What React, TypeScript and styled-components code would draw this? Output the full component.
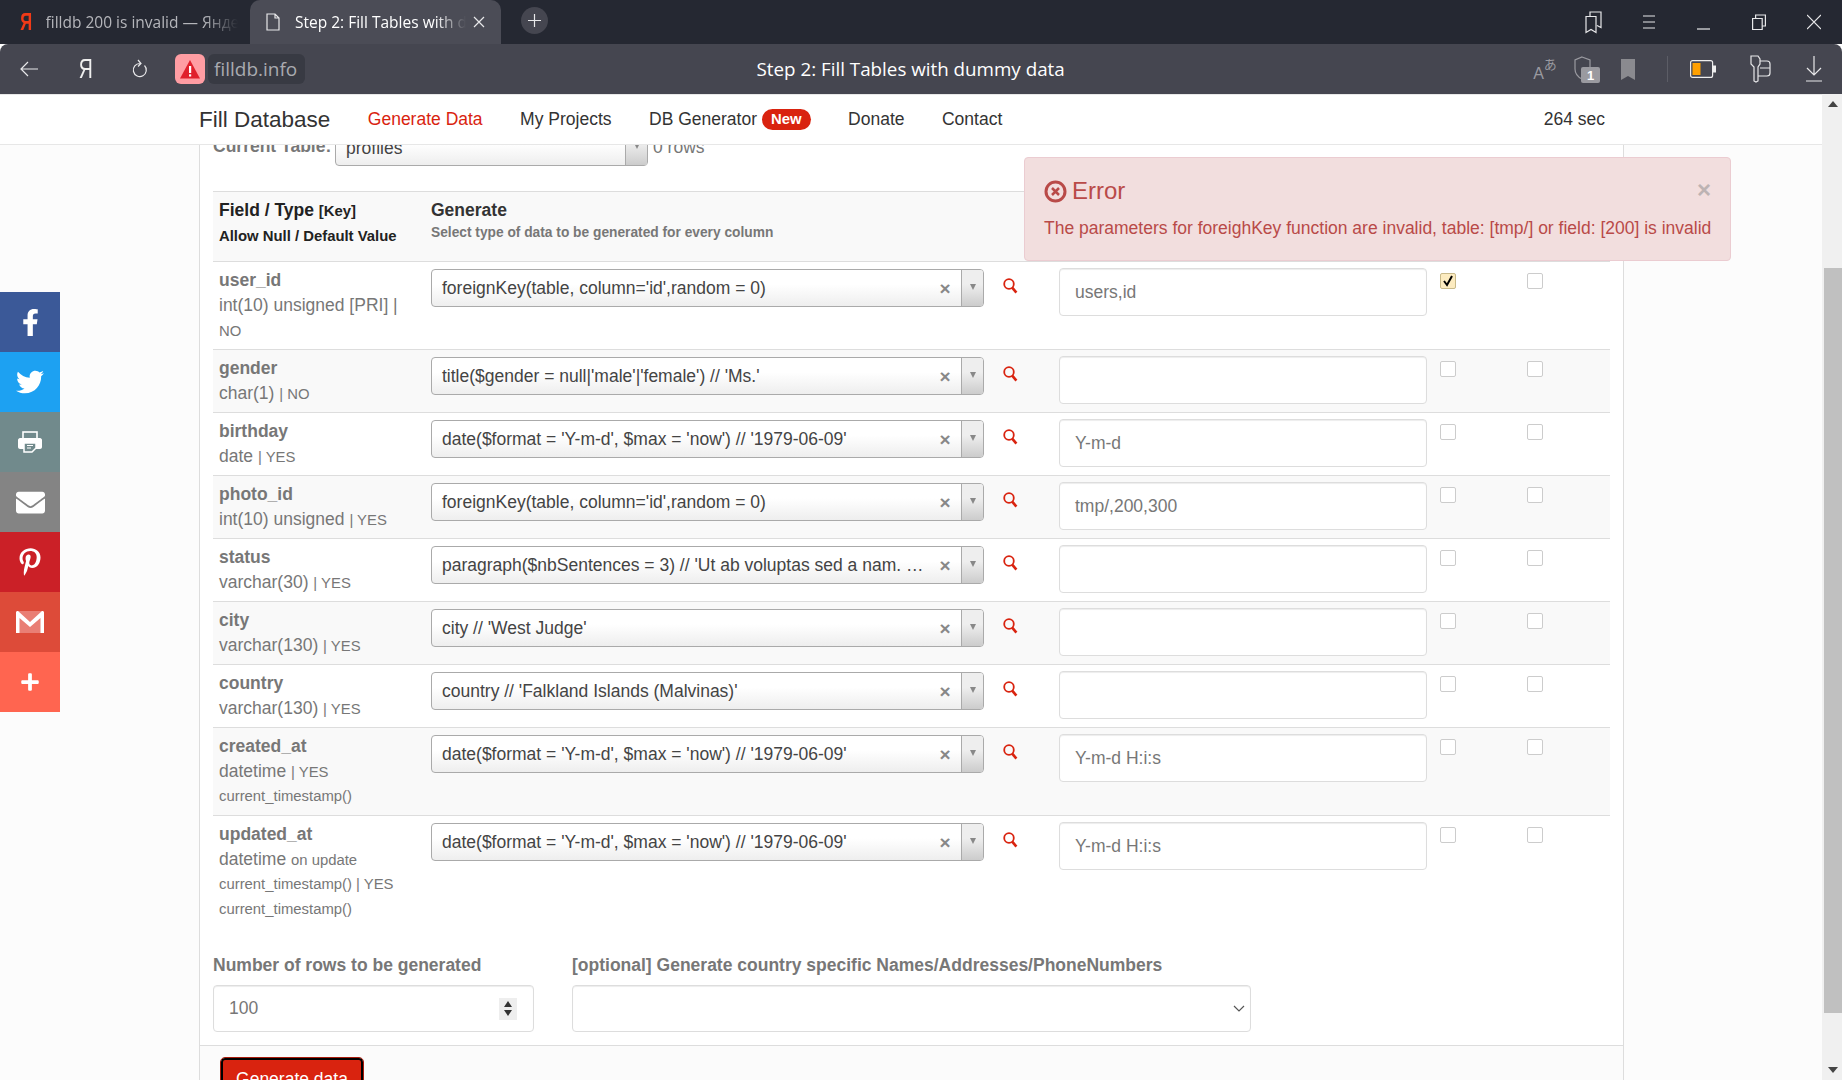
import React from "react";
import styled, { createGlobalStyle } from "styled-components";
import { FaFacebookF, FaTwitter, FaPinterestP, FaEnvelope, FaPlus } from "react-icons/fa";

const GlobalStyle = createGlobalStyle`
  html, body { margin: 0; padding: 0; height: 100%; overflow: hidden; }
  body { font-family: "Liberation Sans", Arial, sans-serif; font-size: 17.5px; color: #333; }
  * { box-sizing: border-box; }
`;

const Win = styled.div`
  position: relative;
  height: 1080px;
  display: flex;
  flex-direction: column;
  overflow: hidden;
`;

const TabStrip = styled.div`
  height: 44px;
  background: #252832;
  display: flex;
  align-items: stretch;
  font-family: "Open Sans", "Noto Sans", sans-serif;
  font-size: 15.5px;
`;
const Tab = styled.div<{ $active?: boolean }>`
  width: ${(p) => (p.$active ? 251 : 250)}px;
  display: flex;
  align-items: center;
  gap: ${(p) => (p.$active ? 15 : 11)}px;
  padding-left: ${(p) => (p.$active ? 16 : 18)}px;
  padding-right: ${(p) => (p.$active ? 16 : 12)}px;
  color: ${(p) => (p.$active ? "#fff" : "#b5b6bb")};
  background: ${(p) => (p.$active ? "#4b4c56" : "transparent")};
  border-radius: 10px 10px 0 0;
`;
const TabTitle = styled.span<{ $active?: boolean }>`
  flex: 1;
  white-space: nowrap;
  overflow: hidden;
  margin-right: ${(p) => (p.$active ? -8 : 0)}px;
  -webkit-mask-image: linear-gradient(to right, #000 82%, transparent 100%);
  mask-image: linear-gradient(to right, #000 82%, transparent 100%);
`;
const YaMark = styled.span<{ $light?: boolean }>`
  display: inline-block;
  font-family: "Liberation Sans", sans-serif;
  font-size: ${(p) => (p.$light ? 27 : 23)}px;
  color: ${(p) => (p.$light ? "#eee" : "#f03a17")};
  font-weight: ${(p) => (p.$light ? 400 : 700)};
  line-height: 1;
  transform: scaleX(0.72);
`;
const NewTab = styled.div`
  width: 27px;
  height: 27px;
  margin: 7px 0 0 20px;
  border-radius: 50%;
  background: #454650;
  display: flex;
  align-items: center;
  justify-content: center;
`;
const WinButtons = styled.div`
  margin-left: auto;
  display: flex;
  align-items: center;
`;
const Slot = styled.div<{ $w: number }>`
  width: ${(p) => p.$w}px;
  flex: none;
  display: flex;
  align-items: center;
  justify-content: center;
`;

const Toolbar = styled.div`
  height: 50px;
  background: #454650;
  border-radius: 8px 8px 0 0;
  display: flex;
  align-items: center;
  padding: 0 14px 0 20px;
  font-family: "Open Sans", "Noto Sans", sans-serif;
`;
const ToolLeft = styled.div`
  display: flex;
  align-items: center;
`;
const ToolBtn = styled.div<{ $w: number }>`
  width: ${(p) => p.$w}px;
  display: flex;
  align-items: center;
  justify-content: flex-start;
`;
const WarnBadge = styled.div`
  width: 30px;
  height: 30px;
  background: #ff9da3;
  border-radius: 6px;
  display: flex;
  align-items: center;
  justify-content: center;
`;
const Domain = styled.div`
  height: 30px;
  margin-left: 3px;
  padding: 0 8px 0 6px;
  background: #383a43;
  border-radius: 6px;
  color: #a9aab0;
  font-size: 19px;
  line-height: 30px;
`;
const PageTitle = styled.div`
  flex: 1;
  text-align: center;
  color: #fff;
  font-size: 18.8px;
  padding-right: 8px;
`;
const ToolRight = styled.div`
  display: flex;
  align-items: center;
`;
const Divider = styled.div`
  width: 1px;
  height: 26px;
  background: #5c5d66;
`;
const TranslateMark = styled.div`
  display: flex;
  align-items: flex-start;
  color: #9a9aa0;
  line-height: 1;
  font-family: "Liberation Sans", "Noto Sans CJK JP", sans-serif;
  height: 26px;
`;
const TranslateLatin = styled.span`
  font-size: 16px;
  margin-top: 10px;
`;
const TranslateKana = styled.span`
  font-family: "Noto Sans CJK JP", sans-serif;
  font-size: 13px;
  margin-top: 1px;
`;

const Viewport = styled.div`
  flex: 1;
  min-height: 0;
  display: flex;
`;
const PageArea = styled.div`
  flex: 1;
  min-width: 0;
  display: flex;
  flex-direction: column;
`;
const Nav = styled.div`
  height: 51px;
  flex: none;
  background: #fff;
  border-top: 1px solid #e8e8e8;
  border-bottom: 1px solid #e7e7e7;
  display: flex;
  align-items: center;
  padding: 0 217px 0 199px;
  color: #333;
`;
const Brand = styled.div`
  font-size: 22.5px;
  margin-right: 37.5px;
`;
const NavLink = styled.div<{ $active?: boolean }>`
  margin-right: 37.5px;
  display: flex;
  align-items: center;
  gap: 5px;
  color: ${(p) => (p.$active ? "#d9230f" : "#333")};
`;
const NewBadge = styled.span`
  background: #d9230f;
  color: #fff;
  font-size: 14.875px;
  font-weight: 700;
  height: 21px;
  line-height: 21px;
  padding: 0 9px;
  border-radius: 11px;
`;
const Timer = styled.div`
  margin-left: auto;
`;

const Scroller = styled.div`
  flex: 1;
  min-height: 0;
  overflow: hidden;
  background: #fcfcfc;
`;
const Panel = styled.div`
  width: 1425px;
  margin-left: 199px;
  background: #fff;
  border-left: 1px solid #ddd;
  border-right: 1px solid #ddd;
`;
const Inner = styled.div`
  padding: 0 13px 0 13px;
`;
const CurrentRow = styled.div`
  height: 46px;
  overflow: hidden;
  display: flex;
  align-items: flex-start;
  gap: 5px;
  color: #777;
`;
const CurrentLabel = styled.div`
  font-weight: 700;
  margin-top: -9px;
  width: 117px;
  white-space: nowrap;
`;
const CurrentSelect = styled.div`
  width: 313px;
  height: 38px;
  margin-top: -17px;
  flex: none;
  display: flex;
  border: 1px solid #aaa;
  border-radius: 4px;
  background: linear-gradient(to bottom, #fff 40%, #eee);
  color: #444;
  line-height: 38px;
`;
const CurrentCount = styled.div`
  margin-top: -8px;
`;
const Grid = styled.div<{ $odd?: boolean }>`
  display: grid;
  grid-template-columns: 218px 553px 75px 368px 13px 16px 71px 16px;
  align-items: start;
  background: ${(p) => (p.$odd ? "#f9f9f9" : "#fff")};
  border-top: 1px solid #ddd;
  padding: 6px 0;
`;
const HeadRow = styled(Grid)`
  height: 70px;
  padding: 0;
  grid-template-columns: 218px 1fr;
  background: #f9f9f9;
`;
const HeadCell = styled.div`
  padding: 5px 6px 0;
  color: #222;
`;
const HeadTitle = styled.div`
  font-weight: 700;
  line-height: 27px;
`;
const SmallKey = styled.span`
  font-size: 14.875px;
  line-height: 1;
`;
const HeadNote = styled.div<{ $muted?: boolean }>`
  font-weight: 700;
  font-size: ${(p) => (p.$muted ? 13.75 : 14.875)}px;
  line-height: ${(p) => (p.$muted ? 17 : 24)}px;
  color: ${(p) => (p.$muted ? "#777" : "#222")};
`;
const GenCell = styled.div`
  padding: 5px 0 0;
`;
const FieldCell = styled.div`
  padding: 0 12px 0 6px;
  color: #777;
  line-height: 25px;
`;
const FieldName = styled.div`
  font-weight: 700;
`;
const Small = styled.span`
  font-size: 14.875px;
  line-height: 1;
`;
const SmallLine = styled.div`
  font-size: 14.875px;
`;
const Select2 = styled.div`
  height: 38px;
  margin-top: 1px;
  display: flex;
  align-items: center;
  border: 1px solid #aaa;
  border-radius: 4px;
  background: linear-gradient(to bottom, #fff 40%, #eee);
  color: #444;
  overflow: hidden;
`;
const Select2Text = styled.div`
  flex: 1;
  min-width: 0;
  padding-left: 10px;
  white-space: nowrap;
  overflow: hidden;
  text-overflow: ellipsis;
`;
const ClearX = styled.div`
  width: 32px;
  flex: none;
  text-align: center;
  color: #888;
  font-size: 19px;
  font-weight: 700;
  line-height: 1;
`;
const ArrowBox = styled.div`
  width: 22px;
  height: 100%;
  flex: none;
  border-left: 1px solid #aaa;
  background: linear-gradient(to bottom, #eee 40%, #ccc);
  display: flex;
  justify-content: center;
  padding-top: 14px;
`;
const ArrowDown = styled.div`
  width: 0;
  height: 0;
  border-left: 3.5px solid transparent;
  border-right: 3.5px solid transparent;
  border-top: 6px solid #888;
`;
const SearchWrap = styled.div`
  padding: 10px 0 0 19px;
  line-height: 0;
`;
const TextBox = styled.div`
  height: 48px;
  padding-left: 15px;
  line-height: 46px;
  background: #fff;
  border: 1px solid #ddd;
  border-radius: 4px;
  box-shadow: inset 0 1px 1px rgba(0, 0, 0, 0.075);
  color: #777;
`;
const Check = styled.div<{ $on?: boolean }>`
  width: 16px;
  height: 16px;
  margin-top: 5px;
  border: 1px solid ${(p) => (p.$on ? "#c8b98a" : "#ccc")};
  border-radius: 2px;
  background: ${(p) => (p.$on ? "#fcebc0" : "#fff")};
  display: flex;
  align-items: center;
  justify-content: center;
`;
const Options = styled.div`
  display: flex;
  gap: 38px;
  padding: 24px 0 13px;
  color: #777;
  border-top: 1px solid transparent;
`;
const OptionCol = styled.div<{ $w: number }>`
  width: ${(p) => p.$w}px;
`;
const OptionLabel = styled.div`
  font-weight: 700;
  line-height: 25px;
  white-space: nowrap;
  margin-bottom: 7px;
`;
const OptionBox = styled.div<{ $pr: number }>`
  height: 47px;
  border: 1px solid #ddd;
  border-radius: 4px;
  box-shadow: inset 0 1px 1px rgba(0, 0, 0, 0.075);
  display: flex;
  align-items: center;
  justify-content: space-between;
  padding: 0 ${(p) => p.$pr}px 0 15px;
  color: #777;
`;
const Spinner = styled.div`
  width: 18px;
  height: 22px;
  background: #eee;
  display: flex;
  flex-direction: column;
  align-items: center;
  justify-content: center;
  gap: 3px;
`;
const SpinUp = styled.div`
  width: 0;
  height: 0;
  border-left: 4px solid transparent;
  border-right: 4px solid transparent;
  border-bottom: 6px solid #333;
`;
const SpinDown = styled(SpinUp)`
  border-bottom: 0;
  border-top: 6px solid #333;
`;
const Footer = styled.div`
  background: #fbfbfb;
  border-top: 1px solid #ddd;
  padding: 12px 20px 20px 21px;
`;
const SubmitBtn = styled.div`
  width: 142px;
  height: 44px;
  background: #d9230f;
  border: 2px solid #000;
  outline: 1px solid #a91b0c;
  border-radius: 4px;
  color: #fff;
  text-align: center;
  line-height: 38px;
`;

const ScrollTrack = styled.div`
  width: 20px;
  flex: none;
  background: #f0f0f0;
  display: flex;
  flex-direction: column;
  align-items: flex-end;
`;
const ScrollArrow = styled.div<{ $down?: boolean }>`
  width: 18px;
  height: 20px;
  flex: none;
  display: flex;
  align-items: center;
  justify-content: center;
  margin-top: ${(p) => (p.$down ? "auto" : "0")};
  &::after {
    content: "";
    border-left: 5px solid transparent;
    border-right: 5px solid transparent;
    ${(p) => (p.$down ? "border-top: 6px solid #444;" : "border-bottom: 6px solid #444;")}
  }
`;
const ScrollThumb = styled.div`
  width: 18px;
  height: 745px;
  margin-top: 154px;
  background: #c0c0c0;
`;

const ShareBar = styled.div`
  position: absolute;
  left: 0;
  top: 292px;
  width: 60px;
  display: flex;
  flex-direction: column;
`;
const ShareItem = styled.div<{ $bg: string }>`
  width: 60px;
  height: 60px;
  background: ${(p) => p.$bg};
  color: #fff;
  display: flex;
  align-items: center;
  justify-content: center;
`;

const Toast = styled.div`
  position: absolute;
  left: 1024px;
  top: 157px;
  width: 707px;
  height: 104px;
  padding: 19px 19px 0;
  background: #f2dede;
  border: 1px solid #ebccd1;
  border-radius: 4px;
  color: #b94a48;
`;
const ToastHead = styled.div`
  display: flex;
  align-items: center;
  gap: 5px;
  height: 28px;
  font-size: 24px;
`;
const ToastClose = styled.div`
  margin-left: auto;
  margin-right: 0;
  margin-top: -2px;
  font-size: 24px;
  font-weight: 700;
  color: #bdb3b3;
`;
const ToastMsg = styled.div`
  margin-top: 13px;
  white-space: nowrap;
`;

const rows = [
  { name: "user_id", type: "int(10) unsigned [PRI] |", extra: "NO", fn: "foreignKey(table, column='id',random = 0)", val: "users,id", on: true },
  { name: "gender", type: "char(1)", extra: "| NO", fn: "title($gender = null|'male'|'female') // 'Ms.'", val: "" },
  { name: "birthday", type: "date", extra: "| YES", fn: "date($format = 'Y-m-d', $max = 'now') // '1979-06-09'", val: "Y-m-d" },
  { name: "photo_id", type: "int(10) unsigned", extra: "| YES", fn: "foreignKey(table, column='id',random = 0)", val: "tmp/,200,300" },
  { name: "status", type: "varchar(30)", extra: "| YES", fn: "paragraph($nbSentences = 3) // 'Ut ab voluptas sed a nam. Sint autem', ", val: "" },
  { name: "city", type: "varchar(130)", extra: "| YES", fn: "city // 'West Judge'", val: "" },
  { name: "country", type: "varchar(130)", extra: "| YES", fn: "country // 'Falkland Islands (Malvinas)'", val: "" },
  { name: "created_at", type: "datetime", extra: "| YES", more: ["current_timestamp()"], fn: "date($format = 'Y-m-d', $max = 'now') // '1979-06-09'", val: "Y-m-d H:i:s" },
  { name: "updated_at", type: "datetime", extra: "on update", more: ["current_timestamp() | YES", "current_timestamp()"], fn: "date($format = 'Y-m-d', $max = 'now') // '1979-06-09'", val: "Y-m-d H:i:s" },
];

const SearchIcon = () => (
  <svg width="15" height="16" viewBox="0 0 15 16" fill="none" stroke="#d9230f" strokeWidth="1.8">
    <circle cx="6" cy="6" r="4.8" />
    <path d="M9.200 9.600 13.400 14.600" strokeWidth="2.600" />
  </svg>
);

const Stroke = ({ w, h, children, color = "#e8e8ea" }: { w: number; h: number; children: React.ReactNode; color?: string }) => (
  <svg width={w} height={h} viewBox={`0 0 ${w} ${h}`} fill="none" stroke={color} strokeWidth="1.2">
    {children}
  </svg>
);

const GmailIcon = () => (
  <svg width="28" height="22" viewBox="0 0 28 22">
    <rect x="0" y="0" width="28" height="22" rx="1" fill="#e97e74" />
    <path d="M0 22V1.500C0 .5 1 0 2 0l12 11L26 0c1 0 2 .5 2 1.500V22h-3.500V7L14 16 3.500 7v15z" fill="#fff" />
  </svg>
);

const PrintIcon = () => (
  <svg width="24" height="22" viewBox="0 0 24 22" fill="none">
    <rect x="5" y="1" width="14" height="7" stroke="#fff" strokeWidth="1.600" />
    <path d="M2 7h20c1 0 2 1 2 2v7c0 1-1 2-2 2H2c-1 0-2-1-2-2V9c0-1 1-2 2-2z" fill="#fff" />
    <path d="M6 12h12v5l-4 4H6z" fill="#718a8c" stroke="#fff" strokeWidth="1.500" />
    <path d="M9 14.500h6M9 17h4" stroke="#fff" strokeWidth="1.200" />
  </svg>
);

const App: React.FC = () => {
  return (
    <Win>
      <GlobalStyle />
      <TabStrip>
        <Tab>
          <YaMark>Я</YaMark>
          <TabTitle>filldb 200 is invalid — Яндекс: нашлось</TabTitle>
        </Tab>
        <Tab $active>
          <Stroke w={14} h={18}>
            <path d="M1 1h8l4 4v12H1zM9 1v4h4" />
          </Stroke>
          <TabTitle $active>Step 2: Fill Tables with dummy data</TabTitle>
          <Stroke w={12} h={12}>
            <path d="M1 1l10 10M11 1 1 11" />
          </Stroke>
        </Tab>
        <NewTab>
          <Stroke w={13} h={13}>
            <path d="M6.500 0v13M0 6.500h13" />
          </Stroke>
        </NewTab>
        <WinButtons>
          <Slot $w={55}>
            <Stroke w={18} h={24}>
              <path d="M1 6.500h10v16l-5-3-5 3zM5 6V2h11v15.500l-4-2" />
            </Stroke>
          </Slot>
          <Slot $w={55}>
            <Stroke w={12} h={16}>
              <path d="M0 2h12M0 8h12M0 14h12" />
            </Stroke>
          </Slot>
          <Slot $w={55}>
            <Stroke w={13} h={16}>
              <path d="M0 15h13" />
            </Stroke>
          </Slot>
          <Slot $w={55}>
            <Stroke w={14} h={16}>
              <path d="M.6 4.500h9.600v11H.6zM3.600 4.500V1h9.800v11h-3.200" />
            </Stroke>
          </Slot>
          <Slot $w={56}>
            <Stroke w={14} h={16}>
              <path d="M0 1l14 14M14 1 0 15" />
            </Stroke>
          </Slot>
        </WinButtons>
      </TabStrip>
      <Toolbar>
        <ToolLeft>
          <ToolBtn $w={56}>
            <Stroke w={18} h={16}>
              <path d="M18 8H1M8 1 1 8l7 7" />
            </Stroke>
          </ToolBtn>
          <ToolBtn $w={56}>
            <YaMark $light>Я</YaMark>
          </ToolBtn>
          <ToolBtn $w={43}>
            <Stroke w={16} h={20}>
              <path d="M12.500 6.500a6.500 6.500 0 1 1-4.500-2M6 1l3 3.500L6 7.500" />
            </Stroke>
          </ToolBtn>
          <WarnBadge>
            <svg width="20" height="19" viewBox="0 0 20 19">
              <path d="M10 0 20 18.500H0z" fill="#e0202c" />
              <rect x="9" y="6" width="2.200" height="7" fill="#fff" />
              <rect x="9" y="14.300" width="2.200" height="2.200" fill="#fff" />
            </svg>
          </WarnBadge>
          <Domain>filldb.info</Domain>
        </ToolLeft>
        <PageTitle>Step 2: Fill Tables with dummy data</PageTitle>
        <ToolRight>
          <Slot $w={42}>
            <TranslateMark>
              <TranslateLatin>A</TranslateLatin>
              <TranslateKana>あ</TranslateKana>
            </TranslateMark>
          </Slot>
          <Slot $w={42}>
            <svg width="26" height="28" viewBox="0 0 26 28" fill="none">
              <path d="M8 2l8 3v9c0 5-4 8-8 10-4-2-7-5-7-10V5z" stroke="#9a9aa0" strokeWidth="1.200" />
              <rect x="7" y="12" width="19" height="16" rx="2" fill="#9a9aa0" />
              <text x="16.500" y="25" textAnchor="middle" fontSize="13" fontWeight="700" fill="#fff" fontFamily="Liberation Sans, sans-serif">1</text>
            </svg>
          </Slot>
          <Slot $w={40}>
            <svg width="14" height="21" viewBox="0 0 14 21">
              <path d="M0 0h14v21l-7-4-7 4z" fill="#8a8a8f" />
            </svg>
          </Slot>
          <Slot $w={38}>
            <Divider />
          </Slot>
          <Slot $w={34}>
            <svg width="26" height="18" viewBox="0 0 26 18" fill="none">
              <rect x=".6" y=".6" width="22" height="16.800" rx="2" stroke="#eee" strokeWidth="1.200" />
              <rect x="2.500" y="3" width="8" height="12" fill="#ffa000" />
              <rect x="23" y="5.500" width="3" height="7" fill="#eee" />
            </svg>
          </Slot>
          <Slot $w={80}>
            <Stroke w={22} h={28}>
              <path d="M2 1h7l2 3v5l-2 3v14l-2 1-2-1V12L2 9zM11 6h7c2 0 3 1 3 3v9c0 2-1 3-3 3h-9M11 13h10" />
            </Stroke>
          </Slot>
          <Slot $w={28}>
            <Stroke w={16} h={26}>
              <path d="M8 0v19M1 12l7 7 7-7M0 25h16" />
            </Stroke>
          </Slot>
        </ToolRight>
      </Toolbar>
      <Viewport>
        <PageArea>
          <Nav>
            <Brand>Fill Database</Brand>
            <NavLink $active>Generate Data</NavLink>
            <NavLink>My Projects</NavLink>
            <NavLink>
              DB Generator <NewBadge>New</NewBadge>
            </NavLink>
            <NavLink>Donate</NavLink>
            <NavLink>Contact</NavLink>
            <Timer>264 sec</Timer>
          </Nav>
          <Scroller>
            <Panel>
              <Inner>
                <CurrentRow>
                  <CurrentLabel>Current Table:</CurrentLabel>
                  <CurrentSelect>
                    <Select2Text>profiles</Select2Text>
                    <ArrowBox>
                      <ArrowDown />
                    </ArrowBox>
                  </CurrentSelect>
                  <CurrentCount>0 rows</CurrentCount>
                </CurrentRow>
                <div>
                  <HeadRow>
                    <HeadCell>
                      <HeadTitle>
                        Field / Type <SmallKey>[Key]</SmallKey>
                      </HeadTitle>
                      <HeadNote>Allow Null / Default Value</HeadNote>
                    </HeadCell>
                    <GenCell>
                      <HeadTitle>Generate</HeadTitle>
                      <HeadNote $muted>Select type of data to be generated for every column</HeadNote>
                    </GenCell>
                  </HeadRow>
                  {rows.map((r, i) => (
                    <Grid key={r.name} $odd={i % 2 === 1}>
                      <FieldCell>
                        <FieldName>{r.name}</FieldName>
                        {r.type} <Small>{r.extra}</Small>
                        {r.more?.map((m, j) => (
                          <SmallLine key={j}>{m}</SmallLine>
                        ))}
                      </FieldCell>
                      <Select2>
                        <Select2Text>{r.fn}</Select2Text>
                        <ClearX>×</ClearX>
                        <ArrowBox>
                          <ArrowDown />
                        </ArrowBox>
                      </Select2>
                      <SearchWrap>
                        <SearchIcon />
                      </SearchWrap>
                      <TextBox>{r.val}</TextBox>
                      <span />
                      <Check $on={r.on}>
                        {r.on && (
                          <svg width="12" height="12" viewBox="0 0 12 12" fill="none" stroke="#000" strokeWidth="2">
                            <path d="M2 6l3 4 5-9" />
                          </svg>
                        )}
                      </Check>
                      <span />
                      <Check />
                    </Grid>
                  ))}
                </div>
                <Options>
                  <OptionCol $w={321}>
                    <OptionLabel>Number of rows to be generated</OptionLabel>
                    <OptionBox $pr={16}>
                      100
                      <Spinner>
                        <SpinUp />
                        <SpinDown />
                      </Spinner>
                    </OptionBox>
                  </OptionCol>
                  <OptionCol $w={679}>
                    <OptionLabel>[optional] Generate country specific Names/Addresses/PhoneNumbers</OptionLabel>
                    <OptionBox $pr={5}>
                      <span />
                      <Stroke w={12} h={8} color="#555">
                        <path d="M1 1l5 5 5-5" />
                      </Stroke>
                    </OptionBox>
                  </OptionCol>
                </Options>
              </Inner>
              <Footer>
                <SubmitBtn>Generate data</SubmitBtn>
              </Footer>
            </Panel>
          </Scroller>
        </PageArea>
        <ScrollTrack>
          <ScrollArrow />
          <ScrollThumb />
          <ScrollArrow $down />
        </ScrollTrack>
      </Viewport>
      <ShareBar>
        <ShareItem $bg="#3b5998"><FaFacebookF size={27} /></ShareItem>
        <ShareItem $bg="#1da1f2"><FaTwitter size={28} /></ShareItem>
        <ShareItem $bg="#718a8c"><PrintIcon /></ShareItem>
        <ShareItem $bg="#848484"><FaEnvelope size={29} /></ShareItem>
        <ShareItem $bg="#cb2027"><FaPinterestP size={28} /></ShareItem>
        <ShareItem $bg="#dd4b39"><GmailIcon /></ShareItem>
        <ShareItem $bg="#ff6550"><FaPlus size={20} /></ShareItem>
      </ShareBar>
      <Toast>
        <ToastHead>
          <svg width="23" height="23" viewBox="0 0 23 23" fill="none" stroke="#b94a48" strokeWidth="3">
            <circle cx="11.500" cy="11.500" r="9.500" />
            <path d="M8 8l7 7M15 8l-7 7" strokeWidth="2.500" />
          </svg>
          Error
          <ToastClose>×</ToastClose>
        </ToastHead>
        <ToastMsg>The parameters for foreighKey function are invalid, table: [tmp/] or field: [200] is invalid</ToastMsg>
      </Toast>
    </Win>
  );
};

export default App;
